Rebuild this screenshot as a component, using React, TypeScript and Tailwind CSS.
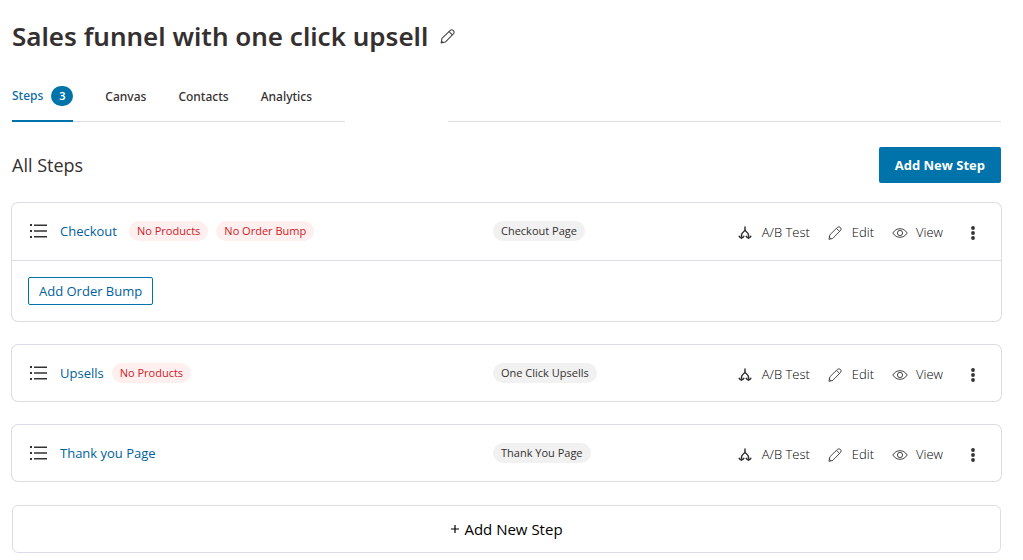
import React from 'react';

type Step = {
  name: string;
  type: string;
  warnings: string[];
  orderBump?: boolean;
};

const steps: Step[] = [
  { name: 'Checkout', type: 'Checkout Page', warnings: ['No Products', 'No Order Bump'], orderBump: true },
  { name: 'Upsells', type: 'One Click Upsells', warnings: ['No Products'] },
  { name: 'Thank you Page', type: 'Thank You Page', warnings: [] },
];

const tabs = ['Canvas', 'Contacts', 'Analytics'];

const PencilIcon = ({ size = 14 }: { size?: number }) => (
  <svg className="text-[#444]" width={size} height={size} viewBox="0 0 16 16" fill="none" stroke="currentColor" strokeWidth="1.1" strokeLinejoin="round" strokeLinecap="round">
    <path d="M1.2 14.8l.9-4.700 8.600-8.400a2.400 2.400 0 0 1 3.500 3.500L5.700 13.900z" />
    <path d="M9.800 2.800l3.400 3.400M1.600 12.800l1.600 1.600" />
  </svg>
);

const EyeIcon = () => (
  <svg className="text-[#444]" width="16" height="14" viewBox="0 0 16 14" fill="none" stroke="currentColor" strokeWidth="1" strokeLinejoin="round">
    <path d="M.8 7C2.600 4.200 5 2.700 8 2.700S13.400 4.200 15.200 7C13.400 9.800 11 11.300 8 11.300S2.600 9.800.8 7z" />
    <circle cx="8" cy="7" r="2.600" />
  </svg>
);

const SplitIcon = () => (
  <svg className="text-[#333]" width="14" height="14" viewBox="0 0 14 14" fill="none" stroke="currentColor" strokeWidth="1.500">
    <path d="M7 .5v3.500M7 3.500C7 6 3.500 6 3.500 9V12M7 3.500C7 6 10.500 6 10.500 9V12" />
    <path d="M.9 9.800c.6 1.500 1.400 2.200 2.600 2.200s2-.7 2.600-2.200M7.900 9.800c.6 1.500 1.400 2.200 2.600 2.200s2-.7 2.600-2.200" />
    <path d="M2.500 11.500h2l-1 1.700zM9.500 11.500h2l-1 1.700z" fill="currentColor" stroke="none" />
  </svg>
);

const ListIcon = () => (
  <svg width="18" height="14" viewBox="0 0 18 14" fill="currentColor">
    <path d="M0 0h2v2H0zM4 .5h13V2H4zM0 6h2v2H0zM4 6.300h13v1.500H4zM0 12h2v2H0zM4 12h13v1.500H4z" />
  </svg>
);

const DotsIcon = () => (
  <svg width="4" height="14" viewBox="0 0 4 14" fill="currentColor">
    <circle cx="2" cy="2" r="1.900" />
    <circle cx="2" cy="7" r="1.900" />
    <circle cx="2" cy="12" r="1.900" />
  </svg>
);

const StepCard = ({ step }: { step: Step }) => (
  <li className="rounded-md bg-white ring-1 ring-[#dcdce8]">
    <div className="flex h-14 items-center px-4">
      <div className="flex flex-1 items-center">
        <button aria-label="Reorder step" className="ml-0.5 mr-3 w-[18px] text-[#333]">
          <ListIcon />
        </button>
        <a href="#" className={`pt-0.5 text-[13px] text-[#005f9c] ${step.orderBump ? 'mr-3' : 'mr-2'}`}>{step.name}</a>
        <div className="flex gap-2">
          {step.warnings.map((warning) => (
            <span key={warning} className="h-5 rounded-full bg-[#ffefef] px-2 text-[11px] leading-5 text-[#cf2027]">{warning}</span>
          ))}
        </div>
      </div>
      <div className="flex w-[492px] items-center justify-between">
        <span className="h-5 rounded-full bg-[#f1f1f1] px-2 text-[11px] leading-5 text-[#353030]">{step.type}</span>
        <div className="flex items-center gap-[18px] pt-1 text-[13px] font-light text-black">
          <button className="flex items-center gap-2.5"><SplitIcon />A/B Test</button>
          <button className="flex items-center gap-2.5"><PencilIcon />Edit</button>
          <button className="flex items-center gap-2"><EyeIcon />View</button>
          <button aria-label="More actions" className="flex w-6 justify-center text-[#333]"><DotsIcon /></button>
        </div>
      </div>
    </div>
    {step.orderBump && (
      <div className="mt-px border-t border-[#dcdce8] p-4">
        <button className="block h-7 rounded-xs border border-[#0073aa] px-2.5 pt-0.5 text-[13px] text-[#005f9c]">Add Order Bump</button>
      </div>
    )}
  </li>
);

export default function App() {
  return (
    <main className="bg-white pt-4 pr-[22px] pb-2 pl-3 font-['Open_Sans','Noto_Sans',sans-serif] text-[#353030]">
      <header className="flex items-center gap-3">
        <h1 className="font-['Noto_Sans',sans-serif] text-[26px] leading-10 font-semibold">Sales funnel with one click upsell</h1>
        <button aria-label="Rename funnel"><PencilIcon size={15} /></button>
      </header>

      <div className="mt-4 flex">
        <nav className="flex h-[50px] w-[333px] gap-8 border-b border-[#dcdce8] font-['Noto_Sans',sans-serif] text-[12px] font-medium">
          <a href="#" className="-mb-px flex items-center gap-2 border-b-2 border-[#0073aa] text-[#0f6ba5]">
            Steps
            <span className="h-5 w-[22px] rounded-full bg-[#0073aa] text-center text-[11px] leading-5 font-semibold text-white">3</span>
          </a>
          {tabs.map((tab) => (
            <a key={tab} href="#" className="flex items-center">{tab}</a>
          ))}
        </nav>
        <div className="ml-[103px] flex-1 border-b border-[#dcdce8]" />
      </div>

      <div className="mt-[25px] flex items-center justify-between">
        <h2 className="text-[18px]">All Steps</h2>
        <button className="h-9 rounded-xs bg-[#0073aa] px-4 pt-0.5 text-[13px] font-bold text-white">Add New Step</button>
      </div>

      <ul className="mt-5 flex flex-col gap-6">
        {steps.map((step) => (
          <StepCard key={step.name} step={step} />
        ))}
      </ul>

      <button className="mt-6 flex h-12 w-full items-center justify-center gap-1 rounded-md border border-[#dcdce8] text-[15px] text-black">
        <svg width="10" height="10" viewBox="0 0 10 10" stroke="currentColor" strokeWidth="1.2"><path d="M1 5h8M5 1v8" /></svg>
        Add New Step
      </button>
    </main>
  );
}
